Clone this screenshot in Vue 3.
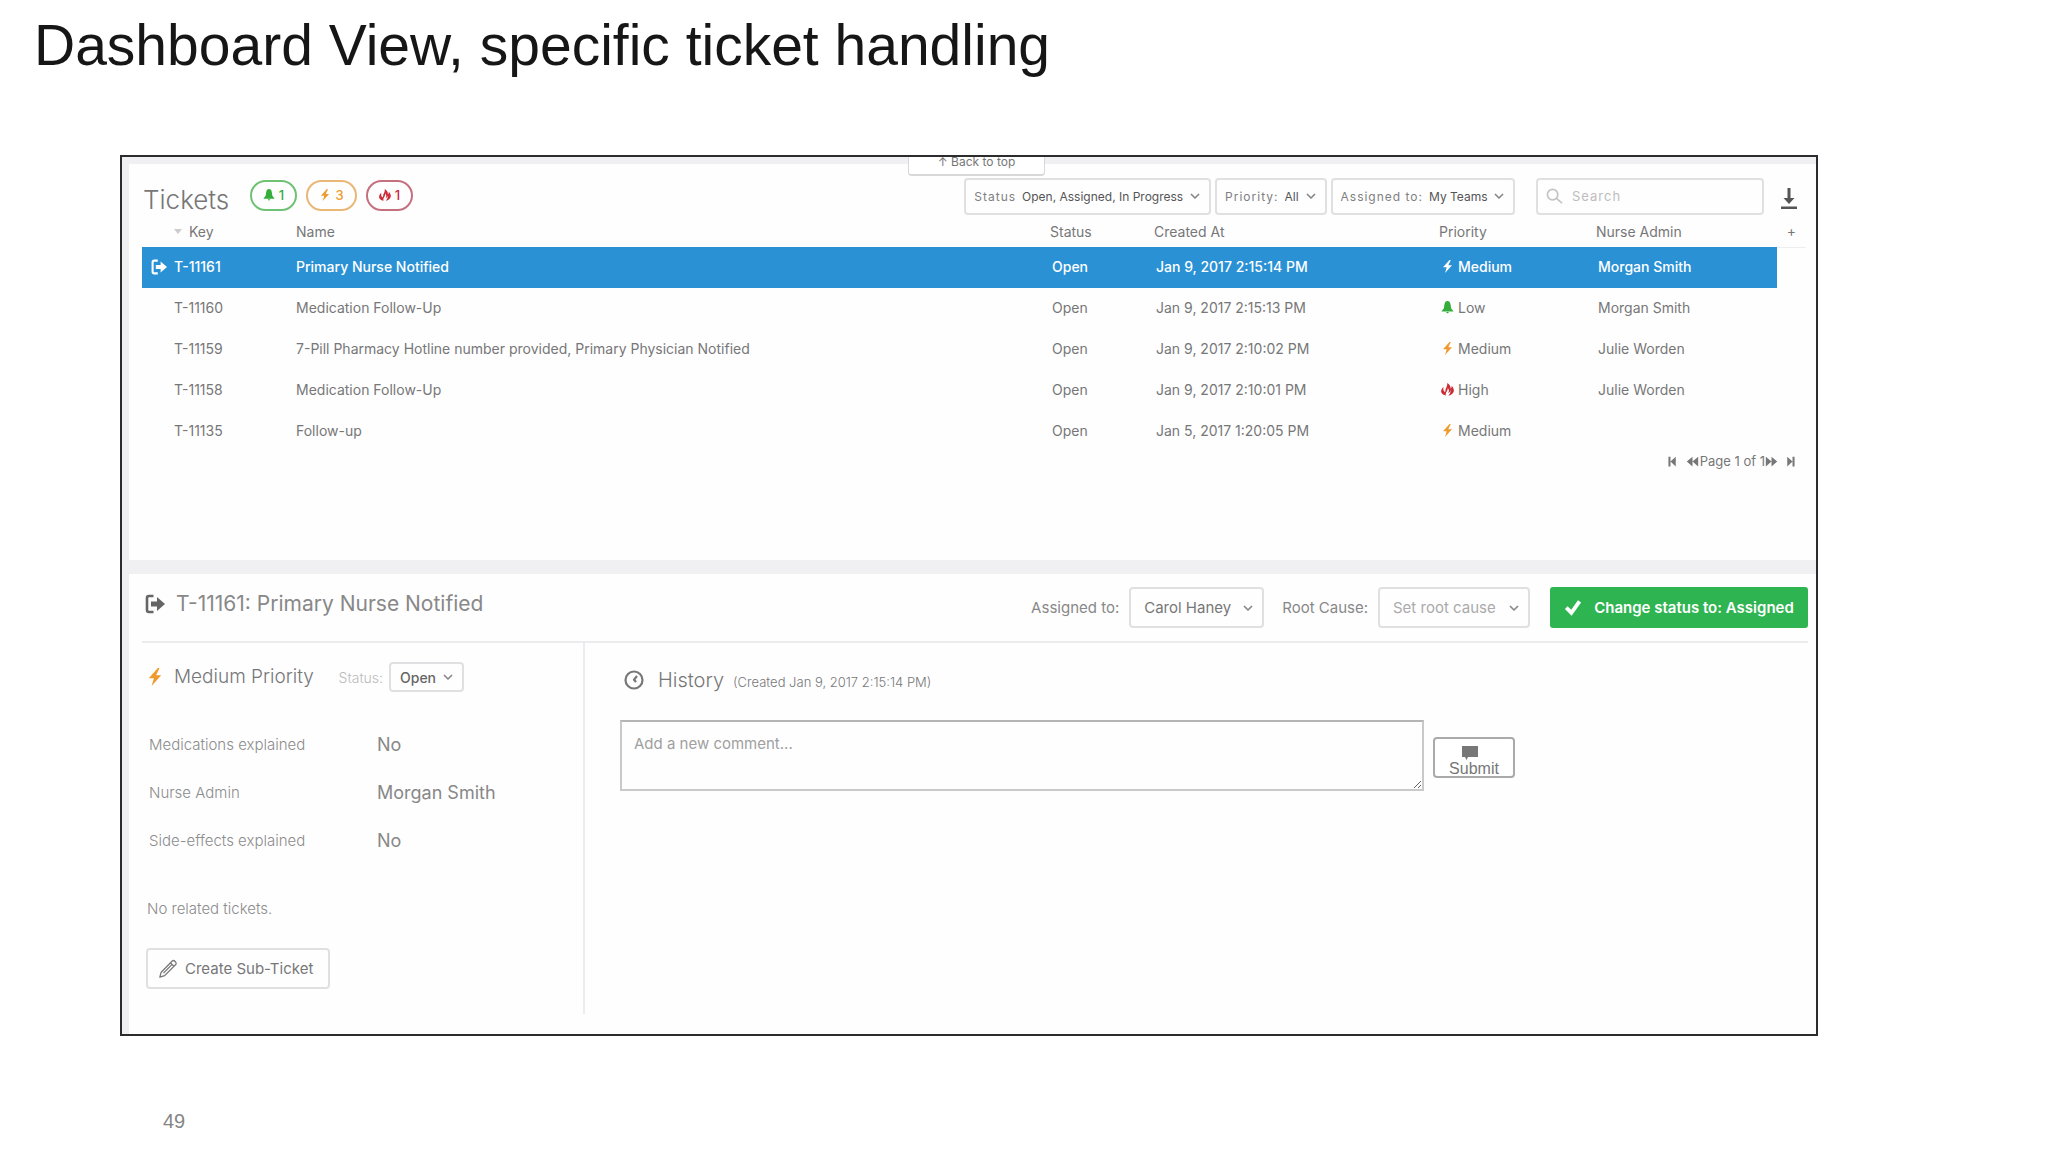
<script setup>
import { h, ref } from 'vue'

const shapes = {
  bell: ['0 0 16 16', 'M8 0C6 0 4.600 1.500 4.300 4L3.500 9L.500 13H15.500L12.500 9L11.700 4C11.400 1.500 10 0 8 0ZM6 13.500H10L8 15.500Z'],
  bolt: ['0 0 16 16', 'M10.500 0L2.500 9H7L5 16L13.500 6.500H9L12 0Z'],
  fire: ['0 0 16 16', 'M7.500 0C8.500 4 5.500 6 5.500 9C5.500 10 5.300 10.500 5 11C3 10.500 2.800 8 3 5C1 7 -.300 9 .300 11.500C1.200 14 3.500 15 6 15.500C5.500 13.500 6 12 7 10.500C8 9 8.500 7.500 8.300 6C10.300 8 10 10 8.800 12.300C11 11.500 11.500 10 11.300 8.500C12.300 10.500 11 13.500 9 15.800C13 15 16 12 15.800 9C15.500 6.500 14.300 4.500 13 3.500C13.200 5.500 12.800 6.500 12 7.200C12 4.500 10.500 1.500 7.500 0Z'],
  first: ['0 0 16 16', 'M3 2H5.500V8L12 2V14L5.500 8V14H3Z'],
  back: ['0 0 16 16', 'M8 2V8L15 2V14L8 8V14L1 8Z'],
  forward: ['0 0 16 16', 'M1 2L8 8V2L15 8L8 14V8L1 14Z'],
  last: ['0 0 16 16', 'M13 2H10.500V8L4 2V14L10.500 8V14H13Z'],
  check: ['0 0 20 20', 'M1 11L4 8L8 12L15.500 1.500L19 4L8.500 18.500Z'],
  download: ['0 0 18 22', 'M7.500 0H10.500V10H14.500L9 16L3.500 10H7.500ZM1 18.500H17V21H1Z'],
  comment: ['0 0 16 14', 'M0 0H16V11H6L4.500 14L3 11H0Z'],
}
const strokes = {
  chevron: ['0 0 10 6', 'M1 1L5 5L9 1', 1.7],
  search: ['0 0 18 18', 'M12.500 7A5.500 5.500 0 1 1 1.500 7A5.500 5.500 0 1 1 12.500 7ZM11 11L17 16', 1.8],
  clock: ['0 0 20 20', 'M18.500 10A8.500 8.500 0 1 1 1.500 10A8.500 8.500 0 1 1 18.500 10ZM13 6L10 9.700L12 12', 2.2],
  pencil: ['0 0 22 22', 'M2 20L3.500 14.500L16 2C17.500 .800 20.800 4 19.800 5.800L7.300 18.300ZM14 4.500L17.500 8M6 15.500L15 6.500', 1.4],
}
const Icon = (props) => {
  const s = shapes[props.name]
  const l = strokes[props.name]
  const [viewBox, d] = s || l
  return h('svg', { viewBox, 'aria-hidden': 'true' }, [
    h('path', s
      ? { d, fill: 'currentColor' }
      : { d, fill: 'none', stroke: 'currentColor', 'stroke-width': l[2], 'stroke-linejoin': 'round' }),
  ])
}
Icon.props = ['name']

const Exit = () => h('svg', { viewBox: '0 0 20 20', 'aria-hidden': 'true' }, [
  h('path', { d: 'M8.500 2H4Q2 2 2 4V16Q2 18 4 18H8.500', fill: 'none', stroke: 'currentColor', 'stroke-width': 2.6 }),
  h('path', { d: 'M6 7.500H12V3L20 10L12 17V12.500H6Z', fill: 'currentColor' }),
])

const counts = [
  { level: 'low', icon: 'bell', n: 1 },
  { level: 'medium', icon: 'bolt', n: 3 },
  { level: 'high', icon: 'fire', n: 1 },
]
const filters = [
  { id: 'f-status', label: 'Status', value: 'Open, Assigned, In Progress' },
  { id: 'f-priority', label: 'Priority:', value: 'All' },
  { id: 'f-assigned', label: 'Assigned to:', value: 'My Teams' },
]
const levels = {
  Low: { level: 'low', icon: 'bell' },
  Medium: { level: 'medium', icon: 'bolt' },
  High: { level: 'high', icon: 'fire' },
}
const tickets = [
  { key: 'T-11161', name: 'Primary Nurse Notified', created: 'Jan 9, 2017 2:15:14 PM', priority: 'Medium', nurse: 'Morgan Smith' },
  { key: 'T-11160', name: 'Medication Follow-Up', created: 'Jan 9, 2017 2:15:13 PM', priority: 'Low', nurse: 'Morgan Smith' },
  { key: 'T-11159', name: '7-Pill Pharmacy Hotline number provided, Primary Physician Notified', created: 'Jan 9, 2017 2:10:02 PM', priority: 'Medium', nurse: 'Julie Worden' },
  { key: 'T-11158', name: 'Medication Follow-Up', created: 'Jan 9, 2017 2:10:01 PM', priority: 'High', nurse: 'Julie Worden' },
  { key: 'T-11135', name: 'Follow-up', created: 'Jan 5, 2017 1:20:05 PM', priority: 'Medium', nurse: '' },
]
const selected = ref('T-11161')
const facts = [
  ['Medications explained', 'No'],
  ['Nurse Admin', 'Morgan Smith'],
  ['Side-effects explained', 'No'],
]
</script>

<template>
  <main class="slide">
    <h1>Dashboard View, specific ticket handling</h1>

    <div class="frame">
      <button class="to-top" type="button">↑ Back to top</button>

      <section class="panel list">
        <header class="list-head">
          <h2>Tickets</h2>
          <div class="counts">
            <span v-for="c in counts" :key="c.level" class="count" :class="c.level"><Icon :name="c.icon" />{{ c.n }}</span>
          </div>
          <div class="filters">
            <div v-for="f in filters" :key="f.id" class="box filter">
              <label :for="f.id">{{ f.label }}</label>
              <select :id="f.id"><option>{{ f.value }}</option></select>
              <Icon name="chevron" class="chev" />
            </div>
          </div>
          <div class="box search">
            <Icon name="search" />
            <input type="search" placeholder="Search" aria-label="Search">
          </div>
          <button class="bare download" type="button" aria-label="Download"><Icon name="download" /></button>
        </header>

        <table>
          <colgroup>
            <col class="c-icon"><col class="c-key"><col><col class="c-status"><col class="c-created"><col class="c-priority"><col class="c-nurse"><col class="c-add">
          </colgroup>
          <thead>
            <tr>
              <th colspan="2" class="th-key"><i class="sort"></i>Key</th>
              <th>Name</th>
              <th>Status</th>
              <th>Created At</th>
              <th>Priority</th>
              <th>Nurse Admin</th>
              <th class="th-add"><button class="bare" type="button">+</button></th>
            </tr>
          </thead>
          <tbody>
            <tr v-for="t in tickets" :key="t.key" :class="{ active: t.key === selected }" @click="selected = t.key">
              <td class="td-icon"><Exit v-if="t.key === selected" /></td>
              <td>{{ t.key }}</td>
              <td>{{ t.name }}</td>
              <td class="inset">Open</td>
              <td class="inset">{{ t.created }}</td>
              <td class="inset"><span class="prio"><Icon :name="levels[t.priority].icon" :class="levels[t.priority].level" />{{ t.priority }}</span></td>
              <td class="inset">{{ t.nurse }}</td>
              <td class="td-add"></td>
            </tr>
          </tbody>
        </table>

        <nav class="pager">
          <button class="bare" type="button" aria-label="First page"><Icon name="first" /></button>
          <button class="bare" type="button" aria-label="Previous page"><Icon name="back" /></button>
          <span>Page 1 of 1</span>
          <button class="bare" type="button" aria-label="Next page"><Icon name="forward" /></button>
          <button class="bare" type="button" aria-label="Last page"><Icon name="last" /></button>
        </nav>
      </section>

      <section class="panel detail">
        <header class="detail-head">
          <Exit class="exit" />
          <h2>T-11161: Primary Nurse Notified</h2>
          <label for="assignee">Assigned to:</label>
          <div class="box assignee">
            <select id="assignee"><option>Carol Haney</option></select>
            <Icon name="chevron" class="chev" />
          </div>
          <label for="cause">Root Cause:</label>
          <div class="box cause">
            <select id="cause"><option>Set root cause</option></select>
            <Icon name="chevron" class="chev" />
          </div>
          <button class="primary" type="button"><Icon name="check" />Change status to: Assigned</button>
        </header>

        <div class="detail-body">
          <aside>
            <div class="prio-line">
              <Icon name="bolt" class="medium" />
              <h3>Medium Priority</h3>
              <label for="status">Status:</label>
              <div class="box status">
                <select id="status"><option>Open</option></select>
                <Icon name="chevron" class="chev" />
              </div>
            </div>
            <dl>
              <div v-for="[k, v] in facts" :key="k"><dt>{{ k }}</dt><dd>{{ v }}</dd></div>
            </dl>
            <p>No related tickets.</p>
            <button class="box sub" type="button"><Icon name="pencil" />Create Sub-Ticket</button>
          </aside>

          <div class="history">
            <div class="history-head">
              <Icon name="clock" />
              <h3>History</h3>
              <small>(Created Jan 9, 2017 2:15:14 PM)</small>
            </div>
            <form class="comment" @submit.prevent>
              <textarea placeholder="Add a new comment..." aria-label="Add a new comment"></textarea>
              <button type="submit"><Icon name="comment" />Submit</button>
            </form>
          </div>
        </div>
      </section>
    </div>

    <footer>49</footer>
  </main>
</template>

<style>
body { margin: 0; background: #fff; }
</style>

<style scoped>
* { box-sizing: border-box; }
h1, h2, h3, p, dl, dd { margin: 0; font-weight: 300; }
button, select, input, textarea { font: inherit; color: inherit; }
svg { display: block; flex: none; }

.slide { padding: 13px 230px 0 120px; font-family: Inter, "Liberation Sans", sans-serif; color: #777; }
h1 {
  margin: 0 0 78px -86px;
  font: 57px/64px "Liberation Sans", Arial, sans-serif;
  color: #161616;
  white-space: nowrap;
}
.frame {
  position: relative;
  overflow: hidden;
  border: 2px solid #2c2c2e;
  background: #f0f0f2;
  padding: 7px 0 0 7px;
}
.panel { background: #fefeff; }
.bare { border: 0; padding: 0; background: none; }

.to-top {
  position: absolute;
  top: -8px;
  left: 786px;
  width: 137px;
  height: 27px;
  padding: 0;
  border: 1px solid #d8d8d8;
  border-bottom-width: 2px;
  border-radius: 4px;
  background: #fff;
  font-size: 12px;
  line-height: 24px;
}

.box {
  position: relative;
  display: flex;
  align-items: center;
  border: 2px solid #e0e0e2;
  border-radius: 4px;
  background: #fefeff;
}
.box select {
  flex: 1;
  min-width: 0;
  appearance: none;
  border: 0;
  padding: 0;
  background: none;
  outline: none;
}
.chev { position: absolute; right: 9px; width: 10px; height: 6px; color: #888; pointer-events: none; }

.list { height: 396px; padding: 13px 10px 0 13px; }
.list-head { display: flex; align-items: center; height: 38px; }
.list-head h2 { font-size: 26px; line-height: 32px; padding: 8px 0 0 1px; width: 108px; }
.counts { display: flex; gap: 9px; }
.count {
  display: flex;
  align-items: center;
  justify-content: center;
  gap: 4px;
  width: 47px;
  height: 31px;
  margin-top: -2px;
  border: 2px solid;
  border-radius: 16px;
  font-size: 13px;
  font-weight: 500;
}
.count.medium { width: 51px; }
.count svg { width: 12px; height: 12px; }
.low { color: #35ad3a; }
.medium { color: #ee9a2d; }
.high { color: #cb2c36; }
.count.low { border-color: #6fc273; }
.count.medium { border-color: #e9b876; }
.count.high { border-color: #c5707e; }

.filters { display: flex; gap: 4px; margin-left: auto; }
.filter { height: 37px; padding: 0 25px 0 8px; gap: 6px; font-size: 12px; }
.filter label { letter-spacing: 1px; color: #808080; }
.filter select { color: #555; }
.search { width: 228px; height: 37px; margin-left: 21px; padding: 0 8px; gap: 9px; }
.search svg { width: 17px; height: 17px; color: #c4c4c4; }
.search input { flex: 1; min-width: 0; border: 0; padding: 0; background: none; outline: none; font-size: 13px; letter-spacing: 1px; }
.search input::placeholder { color: #bdbdbd; }
.download { margin: 6px 0 0 16px; padding-right: 8px; }
.download svg { width: 18px; height: 22px; color: #555; }

table { width: 100%; table-layout: fixed; border-collapse: collapse; font-size: 14px; }
.c-icon { width: 32px; }
.c-key { width: 122px; }
.c-status { width: 104px; }
.c-created { width: 285px; }
.c-priority { width: 157px; }
.c-nurse { width: 181px; }
.c-add { width: 29px; }
th, td { padding: 0; text-align: left; white-space: nowrap; }
th { height: 32px; font-weight: 400; }
td { height: 41px; padding-bottom: 2px; }
.inset { padding-left: 2px; }
.th-key { padding-left: 32px; }
.sort { display: inline-block; margin-right: 7px; vertical-align: 3px; border: 4px solid transparent; border-top: 5px solid #ccc; border-bottom: 0; }
.th-add { text-align: center; border-bottom: 1px solid #eee; }
.td-icon { padding-left: 9px; }
.td-icon svg { width: 16px; height: 16px; }
.prio { display: flex; align-items: center; gap: 4px; }
.prio svg { width: 13px; height: 13px; }
.active td:not(.td-add) { background: #2a91d5; color: #fff; font-weight: 500; }
.active .prio svg { color: #fff; }

.pager { display: flex; align-items: center; justify-content: flex-end; height: 18px; padding-right: 9px; font-size: 13px; }
.pager svg { width: 13px; height: 13px; }
.pager span { margin-left: 1px; }
.pager button:first-child { margin-right: 7px; }
.pager button:last-child { margin-left: 6px; }

.detail { margin-top: 14px; padding: 0 8px 20px 13px; }
.detail-head { display: flex; align-items: center; height: 69px; border-bottom: 2px solid #ececef; font-size: 15px; }
.exit { width: 20px; height: 20px; margin: 0 11px 8px 3px; color: #666; }
.detail-head h2 { margin: 0 auto 8px 0; font-size: 21px; line-height: 28px; font-weight: 400; color: #888; }
.detail-head label { margin-right: 10px; color: #888; }
.detail-head .box { height: 41px; padding-left: 13px; }
.assignee { width: 135px; margin-right: 18px; }
.cause { width: 152px; margin-right: 20px; }
.cause select { color: #aaa; }
.primary {
  display: flex;
  align-items: center;
  justify-content: center;
  gap: 12px;
  width: 258px;
  height: 41px;
  border: 0;
  border-radius: 3px;
  background: #2eb450;
  color: #fff;
  font-weight: 600;
}
.primary svg { width: 18px; height: 18px; }

.detail-body { display: flex; }
aside { flex: none; width: 443px; height: 371px; padding: 19px 0 0 4px; border-right: 2px solid #ececef; }
.prio-line { display: flex; align-items: center; height: 30px; }
.prio-line svg.medium { width: 18px; height: 18px; }
h3 { font-size: 19px; line-height: 24px; }
.prio-line h3 { margin-left: 10px; }
.prio-line label { margin: 0 6px 0 auto; font-size: 14px; font-weight: 300; color: #bbb; }
.status { width: 75px; height: 30px; margin-right: 119px; padding-left: 9px; font-size: 14px; font-weight: 500; color: #666; }
dl { padding: 28px 0 0 3px; }
dl div { display: flex; align-items: center; height: 48px; }
dt { width: 228px; font-size: 15px; font-weight: 300; color: #8c8c8c; }
dd { font-size: 18px; font-weight: 400; color: #888; }
p { margin-top: 33px; padding-left: 1px; font-size: 15px; line-height: 24px; color: #8c8c8c; }
.sub { width: 184px; height: 41px; margin-top: 27px; padding: 0 10px; gap: 7px; font-size: 15px; }
.sub svg { width: 20px; height: 20px; }

.history { flex: 1; padding: 23px 0 0 35px; }
.history-head { display: flex; align-items: center; height: 28px; padding-left: 4px; }
.history-head svg { width: 20px; height: 20px; }
.history-head h3 { margin-left: 14px; font-size: 20px; }
.history-head small { margin: 3px 0 0 9px; font-size: 13px; font-weight: 300; }
.comment { display: flex; align-items: center; gap: 9px; padding-top: 26px; }
textarea { width: 804px; height: 71px; padding: 12px; border: 2px solid #c9c9c9; border-top-color: #b5b5b5; background: transparent; font-size: 15px; }
textarea::placeholder { color: #a0a0a0; }
.comment button {
  display: flex;
  flex-direction: column;
  align-items: center;
  justify-content: flex-end;
  width: 82px;
  height: 41px;
  margin-top: 4px;
  padding: 0;
  border: 2px solid #aaa;
  border-radius: 4px;
  background: #fff;
  font: 16px/15px "Liberation Sans", Arial, sans-serif;
}
.comment button svg { width: 16px; height: 14px; margin: 0 8px 1px 0; }
footer { padding: 73px 0 0 43px; font: 20px/24px "Liberation Sans", Arial, sans-serif; color: #858585; }
</style>
